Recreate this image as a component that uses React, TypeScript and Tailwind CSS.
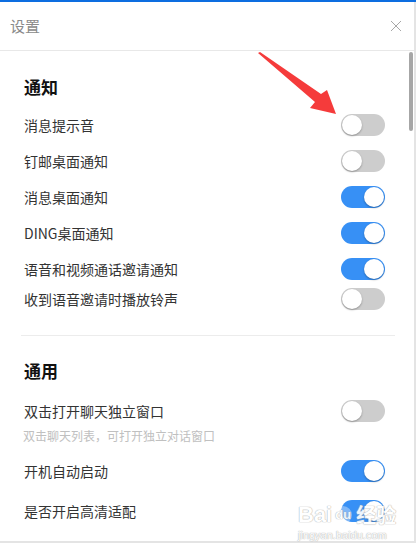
import React from "react";

function Toggle({ on }: { on: boolean }) {
  return (
    <div
      className={`relative w-[44px] h-[22px] rounded-full ${on ? "bg-[#3790f5]" : "bg-[#cdcdcd]"}`}
    >
      <div
        className={`absolute top-[1px] w-[20px] h-[20px] rounded-full bg-white shadow-[0_1px_2px_rgba(0,0,0,0.3)] ${on ? "left-[23px]" : "left-[1px]"}`}
      />
    </div>
  );
}

function Row({ label, on, h }: { label: string; on: boolean; h: string }) {
  return (
    <div className={`flex items-center justify-between pl-[24px] pr-[31px] ${h}`}>
      <span className="text-[14px] text-[#333]">{label}</span>
      <Toggle on={on} />
    </div>
  );
}

export default function App() {
  return (
    <div
      className="relative w-[416px] h-[543px] overflow-hidden bg-white"
      style={{ fontFamily: '"Noto Sans CJK SC", "Noto Sans", sans-serif' }}
    >
      <div className="h-[2px] bg-[#0d6de0]" />
      <div className="h-[49px] flex items-center justify-between pl-[10px] pr-[14px] border-b border-[#e8e8e8]">
        <span className="text-[15px] text-[#8a8a8a]">设置</span>
        <svg width="12" height="12" viewBox="0 0 12 12">
          <path d="M1 1 L11 11 M11 1 L1 11" stroke="#a8a8a8" strokeWidth="1" />
        </svg>
      </div>
      <div className="flex flex-col">
        <div className="h-[22px] mt-[25px] mb-[9px] pl-[24px] flex items-center text-[17px] font-bold text-[#111]">
          通知
        </div>
        <Row label="消息提示音" on={false} h="h-[36px]" />
        <Row label="钉邮桌面通知" on={false} h="h-[36px]" />
        <Row label="消息桌面通知" on={true} h="h-[36px]" />
        <Row label="DING桌面通知" on={true} h="h-[36px]" />
        <Row label="语音和视频通话邀请通知" on={true} h="h-[36px]" />
        <Row label="收到语音邀请时播放铃声" on={false} h="h-[24px]" />
        <div className="mt-[24px] mx-[21px] h-[1px] bg-[#ececec]" />
        <div className="h-[22px] mt-[24px] pl-[24px] flex items-center text-[17px] font-bold text-[#111]">
          通用
        </div>
        <div className="mt-[15px]">
          <Row label="双击打开聊天独立窗口" on={false} h="h-[28px]" />
        </div>
        <div className="mt-[3px] h-[16px] pl-[23px] flex items-center text-[12px] text-[#c0c0c0]">
          双击聊天列表，可打开独立对话窗口
        </div>
        <div className="mt-[9px]">
          <Row label="开机自动启动" on={true} h="h-[36px]" />
        </div>
        <div className="mt-[4px]">
          <Row label="是否开启高清适配" on={true} h="h-[36px]" />
        </div>
      </div>

      {/* scrollbar */}
      <div className="absolute left-[409px] top-[52px] w-[4px] h-[79px] rounded-full bg-[#a6a6a6]" />
      {/* window edges */}
      <div className="absolute right-0 top-[2px] bottom-0 w-[2px] bg-[#e4e4e4]" />
      <div className="absolute left-0 right-0 bottom-0 h-[2px] bg-[#e4e4e4]" />

      {/* red annotation arrow */}
      <svg className="absolute left-0 top-0" width="416" height="543" viewBox="0 0 416 543">
        <polygon
          points="258,53 260,52 321,94 327,90 336,114 310,108 315,102"
          fill="#f53b3b"
        />
      </svg>

      {/* watermark */}
      <div className="absolute left-[298px] top-[502px] flex flex-col items-start opacity-90">
        <div
          className="flex items-center h-[26px] text-[22px] font-bold leading-[26px] text-white"
          style={{ fontFamily: '"Liberation Sans", sans-serif', textShadow: "0 0 1px #aaa, 0 0 1px #aaa" }}
        >
          <span>Bai</span>
          <span className="ml-[2px] w-[18px] h-[18px] rounded-full bg-white/40 text-[13px] leading-[18px] text-center">du</span>
          <span
            className="ml-[4px] text-[20px]"
            style={{ fontFamily: '"Noto Sans CJK SC", sans-serif' }}
          >
            经验
          </span>
        </div>
        <div
          className="text-[11px] leading-[14px] text-white"
          style={{ fontFamily: '"Liberation Sans", sans-serif', textShadow: "0 0 1px #aaa, 0 0 1px #aaa" }}
        >
          jingyan.baidu.com
        </div>
      </div>
    </div>
  );
}
